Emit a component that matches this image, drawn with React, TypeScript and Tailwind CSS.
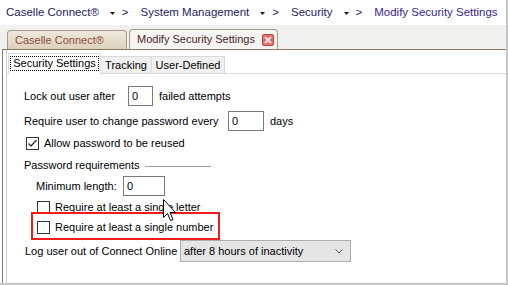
import React from 'react';

const Caret: React.FC = () => (
    <span className="flex items-center ml-[11px] mr-[12px] gap-[7px] text-[#1c1c5c]">
        <svg width="5" height="3" viewBox="0 0 5 3"><path d="M0 0 L5 0 L2.5 3 Z" fill="#1a1a1a" /></svg>
        <span>&gt;</span>
    </span>
);

const Checkbox: React.FC<{ checked?: boolean }> = ({ checked }) => (
    <span className="w-[13px] h-[13px] border border-[#333333] bg-white flex items-center justify-center shrink-0">
        {checked && (
            <svg width="11" height="11" viewBox="0 0 11 11">
                <path d="M1.5 5.5 L4 8 L9.5 2" stroke="#333333" strokeWidth="1.3" fill="none" />
            </svg>
        )}
    </span>
);

const Box: React.FC<{ w: string; value: string }> = ({ w, value }) => (
    <span className={`${w} h-[20px] border border-[#7a7a7a] bg-white flex items-center pl-[3px] shrink-0`}>{value}</span>
);

const App: React.FC = () => {
    return (
        <div className="w-[508px] h-[285px] bg-white border-r-2 border-b-2 border-[#c6c6c6] flex flex-col overflow-hidden relative font-['Liberation_Sans',Arial,sans-serif]">
            {/* breadcrumb */}
            <div className="h-[25px] shrink-0 flex items-center pl-[6px] pt-[1px] text-[11.5px] text-[#1c1c5c] whitespace-nowrap">
                <span>Caselle Connect®</span>
                <Caret />
                <span>System Management</span>
                <Caret />
                <span>Security</span>
                <Caret />
                <span className="text-[#3a1f8c]">Modify Security Settings</span>
            </div>

            {/* document tabs */}
            <div className="h-[24px] shrink-0 bg-[#f0f0ee] flex items-end pl-[7px] gap-[2px] text-[11px] whitespace-nowrap">
                <div className="h-[19px] w-[120px] rounded-t-[4px] border border-b-0 border-[#a39a8f] bg-gradient-to-b from-[#efe8dc] to-[#ddd1bd] pl-[7px] text-[#8c4d3f] flex items-center">
                    Caselle Connect®
                </div>
                <div className="h-[20px] w-[149px] rounded-t-[4px] border border-b-0 border-[#a39a8f] bg-[#f5f4f1] pl-[7px] pr-[3px] text-[#4b2626] flex items-center justify-between">
                    <span>Modify Security Settings</span>
                    <span className="w-[12px] h-[12px] rounded-[2px] bg-[#e46c6c] border border-[#b94a4a] flex items-center justify-center">
                        <svg width="8" height="8" viewBox="0 0 8 8">
                            <path d="M1 1 L7 7 M7 1 L1 7" stroke="#ffffff" strokeWidth="1.6" />
                        </svg>
                    </span>
                </div>
            </div>

            <div className="flex-1 flex flex-col ml-[2px] border-l border-t border-[#8a7666]">
                <div className="flex-1 ml-[3px] border-l border-[#d0d0d0] flex flex-col">
                    {/* inner tabs */}
                    <div className="h-[24px] shrink-0 flex items-end border-b border-[#d9d9d9] pl-[1px] text-[11px] text-black whitespace-nowrap">
                        <div className="h-[21px] w-[93px] -mb-px bg-white border border-b-0 border-[#d9d9d9] px-[1px] pt-[2px] pb-[3px] flex">
                            <span className="flex-1 border border-dotted border-black flex items-center justify-center">Security Settings</span>
                        </div>
                        <div className="h-[17px] w-[51px] bg-[#f0f0f0] border border-b-0 border-l-0 border-[#d9d9d9] flex items-center justify-center">Tracking</div>
                        <div className="h-[17px] w-[73px] bg-[#f0f0f0] border border-b-0 border-l-0 border-[#d9d9d9] flex items-center justify-center">User-Defined</div>
                    </div>

                    {/* settings */}
                    <div className="flex flex-col pl-[17px] text-[11px] text-black whitespace-nowrap">
                        <div className="mt-[12px] h-[20px] flex items-center">
                            <span className="w-[104px]">Lock out user after</span>
                            <Box w="w-[25px]" value="0" />
                            <span className="ml-[6px]">failed attempts</span>
                        </div>
                        <div className="mt-[5px] h-[20px] flex items-center">
                            <span className="w-[204px]">Require user to change password every</span>
                            <Box w="w-[36px]" value="0" />
                            <span className="ml-[6px]">days</span>
                        </div>
                        <div className="mt-[3px] h-[19px] flex items-center pl-[2px]">
                            <Checkbox checked />
                            <span className="ml-[5px]">Allow password to be reused</span>
                        </div>
                        <div className="mt-[4px] h-[16px] flex items-center">
                            <span>Password requirements</span>
                            <span className="ml-[5px] mt-[2px] w-[66px] h-px bg-[#a0a0a0]" />
                        </div>
                        <div className="mt-[3px] h-[20px] flex items-center pl-[12px]">
                            <span className="w-[87px]">Minimum length:</span>
                            <Box w="w-[42px]" value="0" />
                        </div>
                        <div className="mt-[3px] h-[17px] flex items-center pl-[13px]">
                            <Checkbox />
                            <span className="ml-[5px]">Require at least a single letter</span>
                        </div>
                        <div className="mt-[3px] h-[17px] flex items-center pl-[13px]">
                            <Checkbox />
                            <span className="ml-[5px]">Require at least a single number</span>
                        </div>
                        <div className="mt-[4px] h-[22px] flex items-center pl-[1px]">
                            <span className="w-[155px]">Log user out of Connect Online</span>
                            <div className="w-[171px] h-[22px] bg-[#e5e5e5] border border-[#adadad] pl-[3px] pr-[7px] flex items-center justify-between">
                                <span>after 8 hours of inactivity</span>
                                <svg width="8" height="5" viewBox="0 0 8 5">
                                    <path d="M0.5 0.5 L4 4 L7.5 0.5" stroke="#555555" strokeWidth="1" fill="none" />
                                </svg>
                            </div>
                        </div>
                    </div>
                </div>
            </div>

            {/* highlight annotation */}
            <div className="absolute left-[31px] top-[212px] w-[189px] h-[28px] border-2 border-[#f01c1c]" />

            {/* mouse pointer */}
            <svg className="absolute left-[163px] top-[199px]" width="14" height="23" viewBox="0 0 14 23">
                <path d="M0.5 0.5 L0.5 18.5 L4.5 14.5 L7.5 21.5 L10 20.5 L7 13.5 L12.5 13.5 Z" fill="#ffffff" stroke="#000000" strokeWidth="1" />
            </svg>
        </div>
    );
};

export default App;
